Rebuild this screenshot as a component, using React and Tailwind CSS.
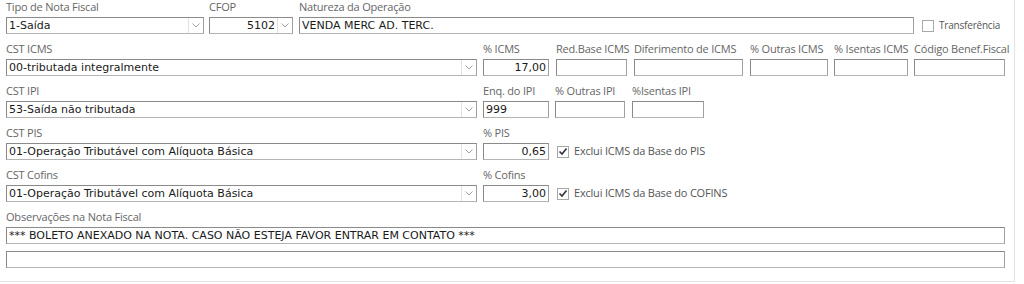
import React from "react";

const LBL = "h-[14px] mb-[3px] text-[11px] leading-[14px] text-[#666] whitespace-nowrap font-['Open_Sans','Noto_Sans',sans-serif] tracking-[-0.2px]";
const BOX = "h-[17px] bg-white border border-[#8a8a8a] border-b-[#b4b4b4] border-r-[#a0a0a0] text-[11px] leading-[15px] text-[#1a1a1a] font-['DejaVu_Sans','Liberation_Sans',sans-serif] whitespace-nowrap overflow-hidden";

function Chevron() {
  return (
    <div className="h-full w-[15px] flex items-center justify-center border-l border-[#e2e2e2] shrink-0">
      <svg width="8" height="5" viewBox="0 0 8 5">
        <polyline points="0.5,0.5 4,4 7.5,0.5" fill="none" stroke="#a0a0a0" strokeWidth="1" />
      </svg>
    </div>
  );
}

function Select({ value, w, right }) {
  return (
    <div className={`${BOX} ${w} flex items-stretch`}>
      <div className={`flex-1 px-[2px] ${right ? "text-right" : ""}`}>{value}</div>
      <Chevron />
    </div>
  );
}

function Input({ value, w, right }) {
  return (
    <div className={`${BOX} ${w} px-[2px] ${right ? "text-right" : ""}`}>{value}</div>
  );
}

function Field({ label, children, w }) {
  return (
    <div className={`flex flex-col ${w}`}>
      <div className={LBL}>{label}</div>
      {children}
    </div>
  );
}

function Check({ checked, label, small }) {
  return (
    <div className="flex items-center gap-[5px]">
      <div className="w-[12px] h-[12px] border border-[#a8a8a8] bg-white flex items-center justify-center">
        {checked && (
          <svg width="10" height="9" viewBox="0 0 10 9">
            <polyline points="1.5,4.5 4,7 8.5,1.5" fill="none" stroke="#333" strokeWidth="1.6" />
          </svg>
        )}
      </div>
      <span className={`${small ? "text-[10px]" : "text-[11px]"} text-[#555] whitespace-nowrap font-['Open_Sans','Noto_Sans',sans-serif] tracking-[-0.2px]`}>{label}</span>
    </div>
  );
}

export default function App() {
  return (
    <div className="w-[1015px] h-[282px] bg-white border-r border-b border-[#e3e3e3] pl-[6px] flex flex-col">
      {/* Row 1 */}
      <div className="flex items-end h-[34px]">
        <Field label="Tipo de Nota Fiscal" w="w-[198px]">
          <Select value="1-Saída" w="w-[198px]" />
        </Field>
        <Field label="CFOP" w="w-[84px] ml-[5px]">
          <Select value="5102" w="w-[84px]" right />
        </Field>
        <Field label="Natureza da Operação" w="w-[615px] ml-[6px]">
          <Input value="VENDA MERC AD. TERC." w="w-[615px]" />
        </Field>
        <div className="ml-[8px] h-[17px] flex items-center">
          <Check label="Transferência" small />
        </div>
      </div>

      {/* Row 2 */}
      <div className="flex items-end h-[34px] mt-[8px]">
        <Field label="CST ICMS" w="w-[471px]">
          <Select value="00-tributada integralmente" w="w-[471px]" />
        </Field>
        <Field label="% ICMS" w="w-[66px] ml-[6px]">
          <Input value="17,00" w="w-[66px]" right />
        </Field>
        <Field label="Red.Base ICMS" w="w-[71px] ml-[7px]">
          <Input value="" w="w-[71px]" />
        </Field>
        <Field label="Diferimento de ICMS" w="w-[109px] ml-[7px]">
          <Input value="" w="w-[109px]" />
        </Field>
        <Field label="% Outras ICMS" w="w-[78px] ml-[7px]">
          <Input value="" w="w-[78px]" />
        </Field>
        <Field label="% Isentas ICMS" w="w-[74px] ml-[6px]">
          <Input value="" w="w-[74px]" />
        </Field>
        <Field label="Código Benef.Fiscal" w="w-[91px] ml-[6px]">
          <Input value="" w="w-[91px]" />
        </Field>
      </div>

      {/* Row 3 */}
      <div className="flex items-end h-[34px] mt-[8px]">
        <Field label="CST IPI" w="w-[471px]">
          <Select value="53-Saída não tributada" w="w-[471px]" />
        </Field>
        <Field label="Enq. do IPI" w="w-[66px] ml-[6px]">
          <Input value="999" w="w-[66px]" />
        </Field>
        <Field label="% Outras IPI" w="w-[70px] ml-[6px]">
          <Input value="" w="w-[70px]" />
        </Field>
        <Field label="%Isentas IPI" w="w-[72px] ml-[7px]">
          <Input value="" w="w-[72px]" />
        </Field>
      </div>

      {/* Row 4 */}
      <div className="flex items-end h-[34px] mt-[8px]">
        <Field label="CST PIS" w="w-[471px]">
          <Select value="01-Operação Tributável com Alíquota Básica" w="w-[471px]" />
        </Field>
        <Field label="% PIS" w="w-[66px] ml-[6px]">
          <Input value="0,65" w="w-[66px]" right />
        </Field>
        <div className="ml-[8px] h-[17px] flex items-center">
          <Check checked label="Exclui ICMS da Base do PIS" />
        </div>
      </div>

      {/* Row 5 */}
      <div className="flex items-end h-[34px] mt-[8px]">
        <Field label="CST Cofins" w="w-[471px]">
          <Select value="01-Operação Tributável com Alíquota Básica" w="w-[471px]" />
        </Field>
        <Field label="% Cofins" w="w-[66px] ml-[6px]">
          <Input value="3,00" w="w-[66px]" right />
        </Field>
        <div className="ml-[8px] h-[17px] flex items-center">
          <Check checked label="Exclui ICMS da Base do COFINS" />
        </div>
      </div>

      {/* Observações */}
      <div className="flex flex-col mt-[8px] w-[999px]">
        <div className={LBL}>Observações na Nota Fiscal</div>
        <Input value="*** BOLETO ANEXADO NA NOTA. CASO NÃO ESTEJA FAVOR ENTRAR EM CONTATO ***" w="w-[999px]" />
        <div className="mt-[7px]">
          <Input value="" w="w-[999px]" />
        </div>
      </div>
    </div>
  );
}
